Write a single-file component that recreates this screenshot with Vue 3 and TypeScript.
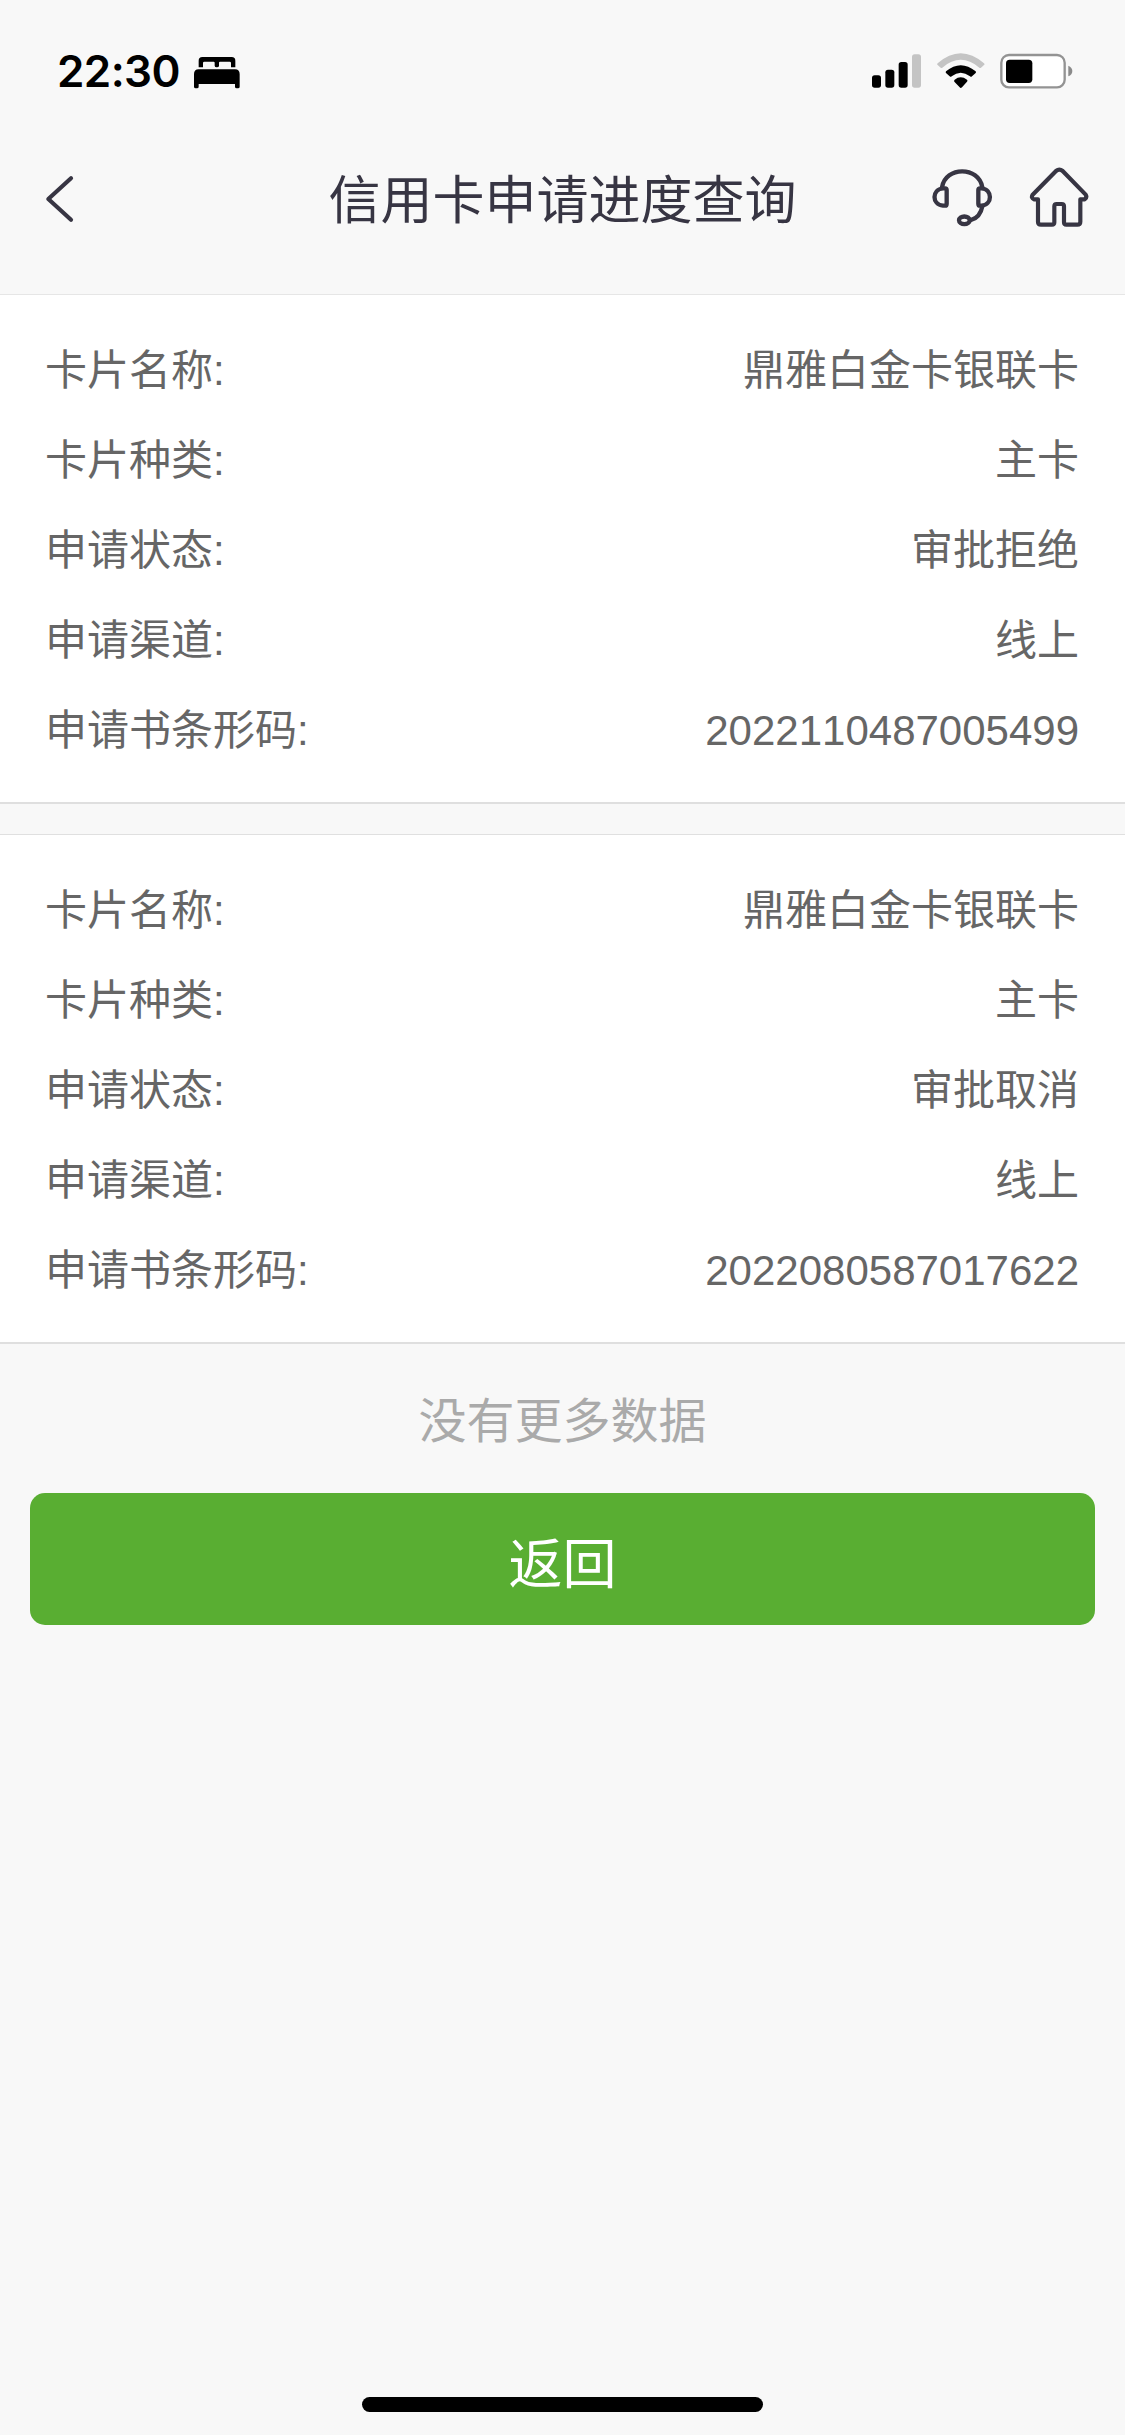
<script setup lang="ts">
interface Field {
  label: string
  value: string
}

interface Application {
  id: string
  fields: Field[]
}

function makeApplication(status: string, barcode: string): Application {
  return {
    id: barcode,
    fields: [
      { label: '卡片名称:', value: '鼎雅白金卡银联卡' },
      { label: '卡片种类:', value: '主卡' },
      { label: '申请状态:', value: status },
      { label: '申请渠道:', value: '线上' },
      { label: '申请书条形码:', value: barcode },
    ],
  }
}

const applications: Application[] = [
  makeApplication('审批拒绝', '2022110487005499'),
  makeApplication('审批取消', '2022080587017622'),
]
</script>

<template>
  <div class="screen">
    <div class="status-bar">
      <div class="status-left">
        <span class="time">22:30</span>
        <svg class="bed" width="46" height="32" viewBox="492 80 138 96">
          <path d="M506 111V91Q506 80 517 80H605Q616 80 616 91V111H603V98Q603 94 599 94H570Q567 94 567 97V106Q567 111 560.500 111Q554 111 554 106V97Q554 94 551 94H523Q519 94 519 98V111Z" />
          <path d="M492 169V131Q492 117 506 117H615Q629 117 629 131V169Q629 174 624 174H620Q615 174 615 169V161H506V169Q506 174 501 174H497Q492 174 492 169Z" />
        </svg>
      </div>
      <div class="status-right">
        <svg class="signal" width="50" height="36" viewBox="66 70 150 108">
          <rect x="66" y="137" width="27" height="37" rx="8" />
          <rect x="106" y="120" width="27" height="54" rx="8" />
          <rect x="146" y="97" width="27" height="77" rx="8" />
          <rect x="186" y="74" width="27" height="100" rx="8" fill="#c4c4c4" />
        </svg>
        <svg class="wifi" width="48" height="36" viewBox="260 68 144 108">
          <path d="M262 99Q331 39 401 99Q404 102 401 104L392 112Q390 114 387 112Q331 65 276 112Q273 114 271 112L262 104Q259 102 262 99Z" fill="#c4c4c4" />
          <path d="M287 123Q331 86 376 123Q378 126 376 128L365 138Q362 141 359 138Q331 116 304 138Q301 141 298 138L287 128Q285 126 287 123Z" />
          <path d="M313 148Q331 134 350 148Q353 151 350 154L335 171Q331 175 328 171L312 154Q310 151 313 148Z" />
        </svg>
        <svg class="battery" width="73" height="36" viewBox="449 69 219 108">
          <rect x="453" y="75" width="190" height="97" rx="23" fill="#fff" stroke="#939393" stroke-width="7" />
          <rect x="467" y="89" width="79" height="70" rx="11" />
          <path d="M654 107Q666 112 666 123Q666 135 654 139Z" fill="#8a8a8a" />
        </svg>
      </div>
    </div>

    <header class="nav-bar">
      <button class="icon-button back" aria-label="返回上一页">
        <svg width="32" height="48" viewBox="74 75 96 144">
          <path d="M152 84.500L84 147L152 209.500" fill="none" stroke="#373543" stroke-width="12.500" stroke-linecap="round" stroke-linejoin="round" />
        </svg>
      </button>
      <h1 class="title">信用卡申请进度查询</h1>
      <div class="actions">
        <button class="icon-button" aria-label="客服">
          <svg width="62" height="62" viewBox="64 48 186 186" fill="none" stroke="#373543" stroke-width="13" stroke-linecap="round" stroke-linejoin="round">
            <path d="M97 112C108 48 207 48 218 112" />
            <path d="M111 120Q111 115 106 115H100C66 118 66 164 100 167H106Q111 167 111 161Z" />
            <path d="M206 120Q206 115 211 115H216C249 118 249 164 216 167H211Q206 167 206 161Z" />
            <path d="M218 169C214 190 202 205 184 210" />
            <ellipse cx="164" cy="211" rx="16" ry="11.500" />
          </svg>
        </button>
        <button class="icon-button" aria-label="首页">
          <svg width="60" height="62" viewBox="358 48 180 186" fill="none" stroke="#373543" stroke-width="12.500" stroke-linecap="round" stroke-linejoin="round">
            <path d="M385 148H373Q363 144 369 134L439 63Q449 55 459 63L528 134Q533 142 525 148H512V215Q512 224 503 224H470Q463 224 463 217V169Q463 162 456 162H441Q434 162 434 169V217Q434 224 427 224H394Q385 224 385 215Z" />
          </svg>
        </button>
      </div>
    </header>

    <main>
      <section v-for="item in applications" :key="item.id" class="card">
        <div v-for="field in item.fields" :key="field.label" class="row">
          <span>{{ field.label }}</span>
          <span>{{ field.value }}</span>
        </div>
      </section>
      <p class="no-more">没有更多数据</p>
      <button class="return-button">返回</button>
    </main>

    <div class="home-indicator"></div>
  </div>
</template>

<style>
body {
  margin: 0;
  background: #f8f8f8;
}
</style>

<style scoped>
.screen {
  display: flex;
  flex-direction: column;
  box-sizing: border-box;
  width: 1125px;
  height: 2435px;
  background: #f8f8f8;
  font-family: "Liberation Sans", "Noto Sans CJK SC", sans-serif;
  font-kerning: none;
}

.status-bar {
  display: flex;
  justify-content: space-between;
  box-sizing: border-box;
  height: 132px;
  padding: 53px 52px 0 57px;
}

.status-left,
.status-right {
  display: flex;
  align-items: flex-start;
}

.time {
  width: 137px;
  font: 600 44px/37px Inter, sans-serif;
  letter-spacing: -0.600px;
  color: #000;
}

.bed {
  margin-top: 4px;
}

.wifi {
  margin-left: 15px;
}

.battery {
  margin-left: 15px;
}

.nav-bar {
  display: grid;
  grid-template-columns: 1fr auto 1fr;
  align-items: center;
  box-sizing: border-box;
  height: 163px;
  padding: 0 36px 31px;
  border-bottom: 1px solid #e6e6e6;
}

.title {
  margin: 0;
  padding-top: 6px;
  font-size: 52px;
  font-weight: 400;
  line-height: 76px;
  color: #373543;
}

button {
  margin: 0;
  padding: 0;
  border: 0;
  background: none;
}

.icon-button {
  display: flex;
}

.icon-button.back {
  padding: 2px 0 0 9px;
}

.actions {
  display: flex;
  justify-content: flex-end;
  gap: 36px;
  padding-bottom: 1px;
}

.card {
  box-sizing: border-box;
  height: 509px;
  padding: 31px 46px 0 45px;
  border-bottom: 2px solid #dfdfdf;
  background: #fff;
}

.card + .card {
  height: 510px;
  margin-top: 30px;
  border-top: 1px solid #e0e0e0;
}

.row {
  display: flex;
  justify-content: space-between;
  height: 90px;
  font-size: 42px;
  line-height: 90px;
  color: #666;
}

.no-more {
  margin: 0;
  padding: 42px 0 35px;
  font-size: 48px;
  line-height: 72px;
  text-align: center;
  color: #aaa;
}

.return-button {
  display: block;
  width: 1065px;
  height: 132px;
  margin: 0 30px;
  padding-top: 12px;
  border-radius: 15px;
  background: #59ae32;
  font-family: inherit;
  font-size: 54px;
  line-height: 120px;
  color: #fff;
}

.home-indicator {
  width: 401px;
  height: 15px;
  margin: auto auto 23px;
  border-radius: 8px;
  background: #000;
}
</style>
